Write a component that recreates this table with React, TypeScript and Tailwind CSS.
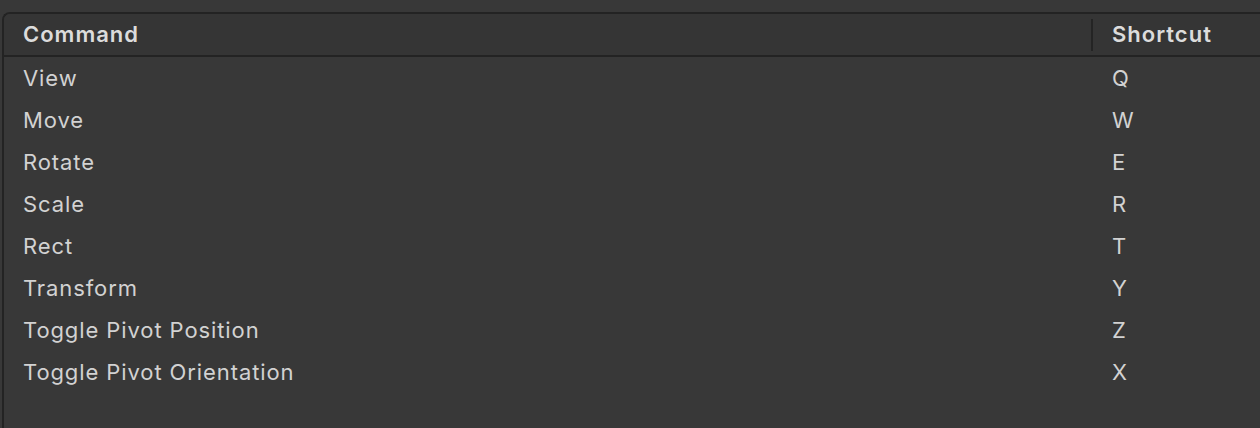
import React from "react";

const rows: [string, string][] = [
  ["View", "Q"],
  ["Move", "W"],
  ["Rotate", "E"],
  ["Scale", "R"],
  ["Rect", "T"],
  ["Transform", "Y"],
  ["Toggle Pivot Position", "Z"],
  ["Toggle Pivot Orientation", "X"],
];

export default function App() {
  return (
    <div
      className="w-[1260px] h-[428px] bg-[#383838] pt-[12px] pl-[2px] overflow-hidden"
      style={{ fontFamily: "Inter, 'Noto Sans', sans-serif" }}
    >
      <div className="h-full border-t-2 border-l-2 border-[#232323] rounded-tl-[8px] bg-[#383838] overflow-hidden">
        <div className="flex items-center h-[43px] bg-[#353535] border-b-2 border-[#232323] text-[22px] tracking-[1px] font-semibold text-[#dcdcdc]">
          <div className="flex-1 pl-[19px]">Command</div>
          <div className="w-[2px] h-[32px] bg-[#242424]" />
          <div className="w-[167px] pl-[19px]">Shortcut</div>
        </div>
        <div>
          {rows.map(([c, s]) => (
            <div key={c} className="flex items-center h-[42px] text-[22px] tracking-[0.9px] text-[#d2d2d2]">
              <div className="flex-1 pl-[19px]">{c}</div>
              <div className="w-[169px] pl-[21px]">{s}</div>
            </div>
          ))}
        </div>
      </div>
    </div>
  );
}
